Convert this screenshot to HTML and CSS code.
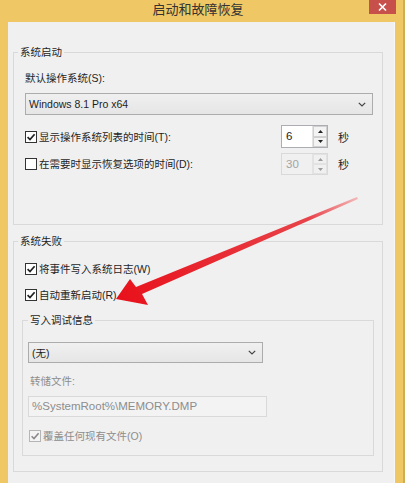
FILE: index.html
```html
<!doctype html>
<html lang="zh-CN">
 <head>
  <meta charset="UTF-8">
  <link rel="stylesheet" href="styles.css">
  <title>启动和故障恢复</title>
 </head>
 <body>
  <div class="win">
   <div class="titlebar">
    <span></span>
    <span class="title">启动和故障恢复</span>
    <span class="closebox">
     <span class="close"><svg width="9" height="8" viewBox="0 0 9 8"><path d="M1 0.5L8 7.5M8 0.5L1 7.5" stroke="#fff" stroke-width="1.6"/></svg></span>
    </span>
   </div>
   <div class="client">
    <!-- 系统启动 -->
    <fieldset class="grp g1">
     <legend>系统启动</legend>
     <div class="body1">
      <div class="lbl">默认操作系统(S):</div>
      <div class="combo cb1">
       <span>Windows 8.1 Pro x64</span>
       <svg width="8" height="5" viewBox="0 0 8 5"><path d="M0.8 0.8L4 4L7.2 0.8" fill="none" stroke="#444" stroke-width="1.2"/></svg>
      </div>
      <div class="row r1">
       <label class="chk"><span class="box"><svg width="10" height="10" viewBox="0 0 10 10"><path d="M1.6 5.2L4 7.6L8.6 2.2" fill="none" stroke="#222" stroke-width="1.7"/></svg></span>显示操作系统列表的时间(T):</label>
       <div class="spin">
        <span class="val">6</span>
        <span class="btns">
         <span class="up"><svg width="5" height="3" viewBox="0 0 5 3"><path d="M0 3L2.5 0L5 3Z" fill="#222"/></svg></span>
         <span class="dn"><svg width="5" height="3" viewBox="0 0 5 3"><path d="M0 0L2.5 3L5 0Z" fill="#222"/></svg></span>
        </span>
       </div>
       <span class="unit">秒</span>
      </div>
      <div class="row r2">
       <label class="chk"><span class="box"></span>在需要时显示恢复选项的时间(D):</label>
       <div class="spin off">
        <span class="val">30</span>
        <span class="btns">
         <span class="up"><svg width="5" height="3" viewBox="0 0 5 3"><path d="M0 3L2.5 0L5 3Z" fill="#9a9a9a"/></svg></span>
         <span class="dn"><svg width="5" height="3" viewBox="0 0 5 3"><path d="M0 0L2.5 3L5 0Z" fill="#9a9a9a"/></svg></span>
        </span>
       </div>
       <span class="unit">秒</span>
      </div>
     </div>
    </fieldset>

    <!-- 系统失败 -->
    <fieldset class="grp g2">
     <legend>系统失败</legend>
     <div class="row rw">
      <label class="chk"><span class="box"><svg width="10" height="10" viewBox="0 0 10 10"><path d="M1.6 5.2L4 7.6L8.6 2.2" fill="none" stroke="#222" stroke-width="1.7"/></svg></span>将事件写入系统日志(W)</label>
     </div>
     <div class="row rr">
      <label class="chk"><span class="box"><svg width="10" height="10" viewBox="0 0 10 10"><path d="M1.6 5.2L4 7.6L8.6 2.2" fill="none" stroke="#222" stroke-width="1.7"/></svg></span>自动重新启动(R)</label>
     </div>
     <fieldset class="grp g3">
      <legend>写入调试信息</legend>
      <div class="combo cb2">
       <span>(无)</span>
       <svg width="8" height="5" viewBox="0 0 8 5"><path d="M0.8 0.8L4 4L7.2 0.8" fill="none" stroke="#444" stroke-width="1.2"/></svg>
      </div>
      <div class="lbl dim">转储文件:</div>
      <div class="edit">%SystemRoot%\MEMORY.DMP</div>
      <div class="row rd">
       <label class="chk dim"><span class="box off"><svg width="10" height="10" viewBox="0 0 10 10"><path d="M1.6 5.2L4 7.6L8.6 2.2" fill="none" stroke="#8a8a8a" stroke-width="1.6"/></svg></span>覆盖任何现有文件(O)</label>
      </div>
     </fieldset>
    </fieldset>
   </div>

   <!-- 红色标注箭头 -->
   <svg class="arrow" width="405" height="483" viewBox="0 0 405 483">
    <defs>
     <linearGradient id="ag" x1="358" y1="198" x2="114" y2="299" gradientUnits="userSpaceOnUse">
      <stop offset="0" stop-color="#f4b8b8"/>
      <stop offset="0.2" stop-color="#e8434a"/>
      <stop offset="1" stop-color="#e8101a"/>
     </linearGradient>
    </defs>
    <polygon points="116,299 130,279 136,287 357,197 358,199 142,294 148,305" fill="url(#ag)"/>
   </svg>
  </div>
 </body>
</html>
```

FILE: styles.css
```css
body{margin:0;padding:0;}
.win{
    position:relative;
    width:405px; height:483px;
    background:#efc865;
    box-sizing:border-box;
    border-right:2px solid #cfae52;
    font:10.5px "Liberation Sans","Noto Sans CJK SC",sans-serif;
    color:#1e1e1e;
    overflow:hidden;
}
.titlebar{
    display:grid;
    grid-template-columns:1fr auto 1fr;
    height:22px;
    padding-right:7px;
}
.title{font-size:13px;line-height:20px;color:#333;}
.closebox{display:flex;justify-content:flex-end;align-items:flex-start;}
.close{
    width:27px;height:14px;
    background:#c7504b;
    display:flex;align-items:center;justify-content:center;
}
.client{
    height:461px;
    margin:0 8px 0 8px;
    background:#f0f0f0;
    border-right:1px solid #f8f8f8;
    box-sizing:border-box;
    padding-top:23px;
}
.grp{
    margin:0 11px 0 5px;
    padding:0;
    border:1px solid #d9d9d9;
    min-width:0;
}
.grp legend{
    margin-left:4px;
    padding:0 2px;
    line-height:14px;
}
.lbl{line-height:14px;}
.dim{color:#8d8d8d;}
.row{display:flex;align-items:center;}
.chk{display:flex;align-items:center;line-height:14px;}
.box{
    width:12px;height:12px;
    box-sizing:border-box;
    border:1px solid #333;
    background:#fff;
    margin-right:2px;
    display:flex;align-items:center;justify-content:center;
}
.box.off{border-color:#b5b5b5;background:#f4f4f4;}
.combo{
    display:flex;align-items:center;justify-content:space-between;
    box-sizing:border-box;
    border:1px solid #acacac;
    background:linear-gradient(#f0f0f0,#e6e6e6);
    padding:0 6px 0 3px;
}
/* 系统启动 */
.body1{padding:0 0 49px 11px;}
.body1 .lbl{margin-top:12px;}
.cb1{margin-top:8px;width:348px;height:22px;}
.r1{margin-top:10px;height:23px;}
.r2{margin-top:5px;height:22px;}
.r1 .chk,.r2 .chk{width:256px;}
.spin{
    width:47px;height:100%;
    box-sizing:border-box;
    border:1px solid #abadb3;
    background:#fff;
    display:flex;
}
.spin .val{flex:1;padding-left:4px;font-size:11.5px;line-height:20px;}
.btns{
    width:14px;
    display:flex;flex-direction:column;
    border-left:1px solid #e3e3e3;
}
.btns span{
    flex:1;
    display:flex;align-items:center;justify-content:center;
    background:#f3f3f3;
    border:1px solid #d0d0d0;
}
.spin.off{border-color:#d9d9d9;background:#f0f0f0;}
.spin.off .val{color:#a3a3a3;}
.spin.off .btns span{border-color:#e2e2e2;background:#f0f0f0;}
.unit{margin-left:10px;font-size:11px;}
/* 系统失败 */
.g2{margin-top:9px;padding:0 8px 15px 8px;}
.g2 legend{margin-left:-4px;}
.rw{margin-top:14px;padding-left:3px;}
.rr{margin-top:12px;padding-left:3px;}
.g3{margin:11px 0 0 0;padding:0 0 12px 0;}
.g3 legend{margin-left:5px;}
.cb2{margin:15px 0 0 5px;width:235px;height:21px;}
.g3 .lbl{margin-top:11px;padding-left:7px;}
.edit{
    margin:8px 0 0 5px;
    width:239px;height:21px;
    box-sizing:border-box;
    border:1px solid #d9d9d9;
    background:#f3f3f3;
    color:#8d8d8d;
    font-size:11.5px;
    line-height:19px;
    padding-left:3px;
}
.rd{margin:12px 0 0 6px;}
.arrow{position:absolute;left:0;top:0;pointer-events:none;}
```
